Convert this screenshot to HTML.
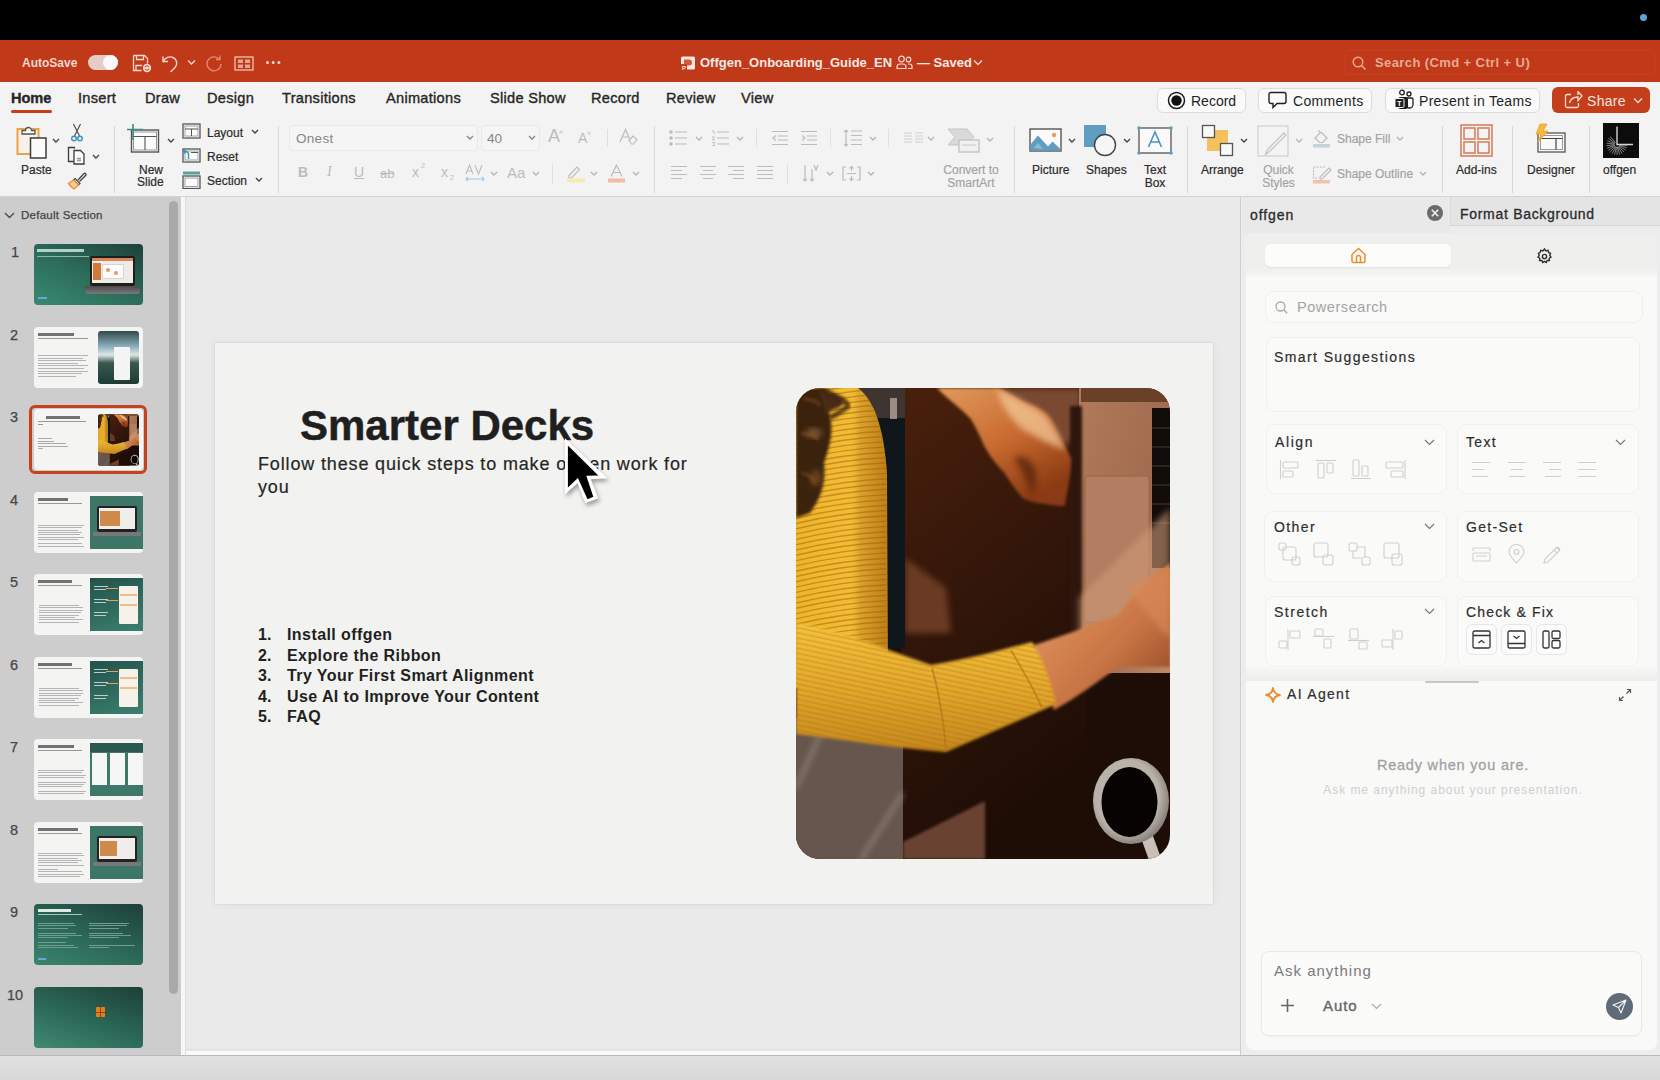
<!DOCTYPE html>
<html><head>
<meta charset="utf-8">
<style>
*{margin:0;padding:0;box-sizing:border-box}
html,body{width:1660px;height:1080px;overflow:hidden;background:#e9e9e9;font-family:"Liberation Sans",sans-serif}
.a{position:absolute}
#top{left:0;top:0;width:1660px;height:40px;background:#000}
#title{left:0;top:40px;width:1660px;height:42px;background:#c03a1a}
#ribbon{left:0;top:82px;width:1660px;height:115px;background:#f3f3f3;border-bottom:1px solid #d3d3d3}
#left{left:0;top:197px;width:181px;height:858px;background:#cdcdcd}
#lstrip{left:181px;top:197px;width:5px;height:858px;background:#f7f7f7;border-right:1px solid #dedede}
#main{left:186px;top:197px;width:1054px;height:858px;background:#eaeaea}
#slide{left:215px;top:343px;width:998px;height:561px;background:#f2f2f0;box-shadow:0 0 1px rgba(0,0,0,.22),0 0 10px rgba(0,0,0,.05)}
#rpane{left:1240px;top:197px;width:420px;height:858px;background:#ededed;border-left:1px solid #cfcfcf}
#status{left:0;top:1055px;width:1660px;height:25px;background:linear-gradient(#e0e0e0,#d8d8d8);border-top:1px solid #b9b9b9}
.tt{line-height:15px;white-space:nowrap}
.tab{top:90px;font-size:14.6px;letter-spacing:.28px;line-height:17px;color:#262626;white-space:nowrap;-webkit-text-stroke:.35px #262626}
.btn{top:88px;height:25px;border-radius:6px;background:#fafafa;border:1px solid #dcdcdc}
.lbl{font-size:12px;line-height:14px;color:#2b2b2b;white-space:nowrap;-webkit-text-stroke:.2px #2b2b2b}
.glbl{font-size:12px;line-height:14px;color:#a2a2a2;white-space:nowrap;-webkit-text-stroke:.15px #a2a2a2}
.chev{fill:none;stroke:#444;stroke-width:1.4}
.gchev{fill:none;stroke:#b5b5b5;stroke-width:1.3}
.sep{width:1px;background:#d8d8d8}
.th{width:109px;height:61px;border-radius:4px;overflow:hidden}
.card{border-radius:9px;border:1px solid #f0f0ef;background:#fafaf9}
.rh{font-size:14px;line-height:16px;color:#2e2e2e;-webkit-text-stroke:.2px #2e2e2e;white-space:nowrap}
.rchev{fill:none;stroke:#777;stroke-width:1.2}
.cfb{width:31px;height:31px;border-radius:6px;border:1px solid #e6e6e6;background:#fbfbfb}
</style></head><body>
<div id="top" class="a"></div>
<div id="title" class="a"></div>

<div class="a" style="left:1640px;top:14px;width:7px;height:7px;border-radius:50%;background:#5ea3d6"></div>
<div class="a tt" style="left:22px;top:56px;font-size:12px;font-weight:bold;color:#f2d8cf">AutoSave</div>
<div class="a" style="left:88px;top:55px;width:30px;height:15px;border-radius:8px;background:#e2cec7"></div>
<div class="a" style="left:103px;top:55px;width:15px;height:15px;border-radius:50%;background:#fafafa"></div>
<svg class="a" style="left:132px;top:54px" width="20" height="19" viewBox="0 0 20 19" fill="none" stroke="#f3d9cf" stroke-width="1.3">
<path d="M1.5 1.5h11l3 3v5"/><path d="M1.5 1.5v15h8"/><path d="M4.5 1.5v4h7v-4"/><path d="M4 16.5v-5h6"/>
<circle cx="15" cy="14" r="4.2" fill="#f3d9cf" stroke="none"/><path d="M13 13.5a2 2 0 0 1 3.8-.5M17 14.5a2 2 0 0 1-3.8.5" stroke="#c03a1a" stroke-width="1"/>
</svg>
<svg class="a" style="left:161px;top:54px" width="19" height="19" viewBox="0 0 19 19" fill="none" stroke="#f3d9cf" stroke-width="1.4">
<path d="M2 2.5v5h5"/><path d="M2.5 7c2-3.5 6-5 9.5-3.5 4 1.8 5 6.5 2 10L9.5 18"/>
</svg>
<svg class="a" style="left:187px;top:59px" width="9" height="7" viewBox="0 0 9 7" fill="none" stroke="#f3d9cf" stroke-width="1.3"><path d="M1 1.5l3.5 3.5 3.5-3.5"/></svg>
<svg class="a" style="left:205px;top:54px" width="18" height="18" viewBox="0 0 18 18" fill="none" stroke="#dc8c74" stroke-width="1.4">
<path d="M14.5 5.5A7 7 0 1 0 16 10"/><path d="M11 5.5h4v-4"/>
</svg>
<svg class="a" style="left:234px;top:56px" width="20" height="15" viewBox="0 0 20 15" fill="none" stroke="#f0cdbf" stroke-width="1.2">
<rect x="1" y="1" width="18" height="13"/><rect x="4" y="3.5" width="5" height="3.5" fill="#e0a593" stroke="none"/><rect x="11" y="3.5" width="5" height="3.5" fill="#e0a593" stroke="none"/><rect x="4" y="8.5" width="5" height="3.5" fill="#e0a593" stroke="none"/><rect x="11" y="8.5" width="5" height="3.5" fill="#e0a593" stroke="none"/>
</svg>
<div class="a" style="left:266px;top:61px;width:3px;height:3px;border-radius:50%;background:#f3d9cf;box-shadow:5.7px 0 0 #f3d9cf,11.4px 0 0 #f3d9cf"></div>
<svg class="a" style="left:680px;top:56px" width="16" height="15" viewBox="0 0 16 15">
<rect x="1" y="0.5" width="14" height="13" rx="1.5" fill="#f6e6e0"/><path d="M4 3.5h5a3 3 0 0 1 0 6H6v4H4z" fill="#d4583a"/><rect x="1" y="8" width="6" height="6" fill="#c23f20"/><text x="2" y="13.5" font-size="6" fill="#f6e6e0" font-family="Liberation Sans" font-weight="bold">P</text>
</svg>
<div class="a tt" style="left:700px;top:55px;font-size:13px;font-weight:bold;color:#f7e8e3">Offgen_Onboarding_Guide_EN</div>
<svg class="a" style="left:896px;top:55px" width="17" height="15" viewBox="0 0 17 15" fill="none" stroke="#f3d9cf" stroke-width="1.2">
<circle cx="5.5" cy="4" r="2.8"/><path d="M1 13.5v-1.5a3 3 0 0 1 3-3h3a3 3 0 0 1 3 3v1.5z"/><circle cx="12.5" cy="4.5" r="2.3"/><path d="M12 9h1.5a2.5 2.5 0 0 1 2.5 2.5v2h-4"/>
</svg>
<div class="a tt" style="left:917px;top:55px;font-size:13px;font-weight:bold;color:#f7e8e3">&mdash; Saved</div>
<svg class="a" style="left:973px;top:59px" width="10" height="7" viewBox="0 0 10 7" fill="none" stroke="#f3d9cf" stroke-width="1.4"><path d="M1 1.5l4 4 4-4"/></svg>
<div class="a" style="left:1345px;top:50px;width:310px;height:25px;border:1px dotted rgba(240,150,120,.18);border-radius:4px"></div>
<svg class="a" style="left:1352px;top:56px" width="15" height="15" viewBox="0 0 15 15" fill="none" stroke="#eaa893" stroke-width="1.4"><circle cx="6" cy="6" r="4.8"/><path d="M9.5 9.5l4 4"/></svg>
<div class="a tt" style="left:1375px;top:55px;font-size:13px;font-weight:bold;color:#eaa893;letter-spacing:.4px">Search (Cmd + Ctrl + U)</div>
<div id="ribbon" class="a"></div>

<div class="a tab" style="left:11px;font-weight:bold;letter-spacing:-.1px">Home</div>
<div class="a" style="left:11px;top:110px;width:41px;height:3px;border-radius:2px;background:#c43e1c"></div>
<div class="a tab" style="left:78px">Insert</div>
<div class="a tab" style="left:145px">Draw</div>
<div class="a tab" style="left:207px">Design</div>
<div class="a tab" style="left:282px">Transitions</div>
<div class="a tab" style="left:386px">Animations</div>
<div class="a tab" style="left:490px">Slide Show</div>
<div class="a tab" style="left:591px">Record</div>
<div class="a tab" style="left:666px">Review</div>
<div class="a tab" style="left:741px">View</div>
<div class="a btn" style="left:1157px;width:89px"></div>
<svg class="a" style="left:1167px;top:91px" width="19" height="19" viewBox="0 0 19 19"><circle cx="9.5" cy="9.5" r="8" fill="none" stroke="#1a1a1a" stroke-width="1.5"/><circle cx="9.5" cy="9.5" r="5.2" fill="#111"/></svg>
<div class="a tt" style="left:1191px;top:94px;font-size:14px;color:#1e1e1e">Record</div>
<div class="a btn" style="left:1258px;width:114px"></div>
<svg class="a" style="left:1268px;top:91px" width="19" height="18" viewBox="0 0 19 18" fill="none" stroke="#1e1e1e" stroke-width="1.4"><path d="M3 1.5h13a2 2 0 0 1 2 2v7a2 2 0 0 1-2 2H9l-4 4v-4H3a2 2 0 0 1-2-2v-7a2 2 0 0 1 2-2z"/></svg>
<div class="a tt" style="left:1293px;top:94px;font-size:14px;color:#1e1e1e;letter-spacing:.35px">Comments</div>
<div class="a btn" style="left:1385px;width:155px"></div>
<svg class="a" style="left:1394px;top:89px" width="20" height="21" viewBox="0 0 20 21">
<circle cx="8" cy="3.5" r="2.3" fill="none" stroke="#1e1e1e" stroke-width="1.3"/><circle cx="15" cy="5" r="2" fill="none" stroke="#1e1e1e" stroke-width="1.3"/>
<path d="M12 9h5.5a1.5 1.5 0 0 1 1.5 1.5v5a3.5 3.5 0 0 1-7 0" fill="none" stroke="#1e1e1e" stroke-width="1.3"/>
<rect x="4" y="8" width="10" height="12" rx="2.5" fill="#1e1e1e"/><rect x="1" y="9.5" width="9" height="9" rx="1.2" fill="#1e1e1e" stroke="#f9f9f9" stroke-width="1"/>
<text x="3" y="17" font-size="7.5" font-weight="bold" fill="#fff" font-family="Liberation Sans">T</text></svg>
<div class="a tt" style="left:1419px;top:94px;font-size:14px;color:#1e1e1e;letter-spacing:.3px">Present in Teams</div>
<div class="a" style="left:1552px;top:87px;width:98px;height:26px;border-radius:6px;background:#c43e1c"></div>
<svg class="a" style="left:1564px;top:91px" width="19" height="18" viewBox="0 0 19 18" fill="none" stroke="#f5ddd5" stroke-width="1.3"><path d="M7 3.5H3a1.5 1.5 0 0 0-1.5 1.5v10A1.5 1.5 0 0 0 3 16.5h10a1.5 1.5 0 0 0 1.5-1.5v-3"/><path d="M5.5 12c1-4 4-6 8.5-6V9.5l4-4.5-4-4.5V4"/></svg>
<div class="a tt" style="left:1587px;top:94px;font-size:14px;color:#f7e4dd;letter-spacing:.3px">Share</div>
<svg class="a" style="left:1633px;top:97px" width="10" height="7" viewBox="0 0 10 7" fill="none" stroke="#f5ddd5" stroke-width="1.3"><path d="M1 1.5l4 4 4-4"/></svg>

<!-- ribbon group clipboard -->
<svg class="a" style="left:16px;top:124px" width="34" height="36" viewBox="0 0 34 36">
<rect x="1.5" y="5" width="21" height="25" fill="#f7f1ea" stroke="#f0a045" stroke-width="2"/>
<path d="M6 10V6.5h3.5a3 3 0 0 1 6 0H19V10z" fill="#fbfbfb" stroke="#555" stroke-width="1.3"/>
<rect x="14.5" y="14" width="15.5" height="20" fill="#fbfbfb" stroke="#3c3c3c" stroke-width="1.5"/>
</svg>
<svg class="a chev" style="left:52px;top:138px" width="8" height="6" viewBox="0 0 8 6"><path d="M1 1l3 3 3-3"/></svg>
<div class="a lbl" style="left:21px;top:163px">Paste</div>
<svg class="a" style="left:70px;top:123px" width="14" height="19" viewBox="0 0 14 19" fill="none">
<path d="M3.5 1l6 12M10.5 1l-6 12" stroke="#444" stroke-width="1.1"/><circle cx="4" cy="15.5" r="2.3" stroke="#3e8fc3" stroke-width="1.4"/><circle cx="10" cy="15.5" r="2.3" stroke="#3e8fc3" stroke-width="1.4"/>
</svg>
<svg class="a" style="left:67px;top:146px" width="20" height="19" viewBox="0 0 20 19" fill="none" stroke="#3c3c3c" stroke-width="1.3">
<path d="M7.5 2.5V1.5H1.5v14h5"/><path d="M7 4.5h6.5l3.5 3.5v10H7z" fill="#fbfbfb"/><path d="M10 12.5h4M10 14.5h4" stroke="#999"/>
</svg>
<svg class="a chev" style="left:92px;top:154px" width="8" height="6" viewBox="0 0 8 6"><path d="M1 1l3 3 3-3"/></svg>
<svg class="a" style="left:67px;top:171px" width="20" height="19" viewBox="0 0 20 19" fill="none">
<path d="M11 9l6-6.5a1.3 1.3 0 0 1 1.8 1.8L12.5 10.5" stroke="#444" stroke-width="1.3"/>
<path d="M8 7.5l5 5-1.5 1.5-5-5z" fill="#fbfbfb" stroke="#444" stroke-width="1.2"/>
<path d="M6.5 9L1.5 12.5c1.5 2 3 4 5.5 5.5L11.5 14z" fill="#f5d09a" stroke="#ec8c3a" stroke-width="1.3"/>
</svg>
<div class="a sep" style="left:114px;top:126px;height:67px"></div>
<!-- slides group -->
<svg class="a" style="left:127px;top:123px" width="34" height="31" viewBox="0 0 34 31" fill="none">
<rect x="4.5" y="7" width="27" height="22" fill="#fafafa" stroke="#555" stroke-width="1.4"/>
<rect x="6.5" y="9" width="23" height="18" stroke="#999" stroke-width="1"/>
<path d="M6.5 13.5h23M18 13.5V27" stroke="#555" stroke-width="1.1"/>
<path d="M6 1v16M0 6.5h16" stroke="#3c8c80" stroke-width="1.6"/>
</svg>
<svg class="a chev" style="left:167px;top:138px" width="8" height="6" viewBox="0 0 8 6"><path d="M1 1l3 3 3-3"/></svg>
<div class="a lbl" style="left:138px;top:164px;line-height:12px;text-align:center;width:26px">New</div>
<div class="a lbl" style="left:137px;top:176px;line-height:12px">Slide</div>
<svg class="a" style="left:182px;top:123px" width="19" height="16" viewBox="0 0 19 16" fill="none">
<rect x="1" y="1" width="17" height="14" fill="#fbfbfb" stroke="#555" stroke-width="1.3"/><rect x="3" y="3" width="13" height="10" stroke="#999" stroke-width=".9"/><path d="M3 6h13M9.5 6v7" stroke="#555" stroke-width="1"/>
</svg>
<div class="a lbl" style="left:207px;top:126px">Layout</div>
<svg class="a chev" style="left:251px;top:129px" width="8" height="6" viewBox="0 0 8 6"><path d="M1 1l3 3 3-3"/></svg>
<svg class="a" style="left:182px;top:147px" width="19" height="16" viewBox="0 0 19 16" fill="none">
<rect x="1" y="2" width="17" height="13" fill="#fbfbfb" stroke="#555" stroke-width="1.3"/><rect x="3" y="4" width="13" height="9" stroke="#999" stroke-width=".9"/><path d="M9 5.5h7" stroke="#555" stroke-width="1"/>
<path d="M6.5 12V7.5a3 3 0 0 0-3-3H1.5M3.5 2.5l-2 2 2 2" stroke="#3e8fc3" stroke-width="1.4"/>
</svg>
<div class="a lbl" style="left:207px;top:150px">Reset</div>
<svg class="a" style="left:182px;top:171px" width="19" height="18" viewBox="0 0 19 18" fill="none">
<rect x="1" y="0.5" width="17" height="3" fill="#5aa39a"/>
<rect x="1" y="5" width="17" height="12.5" fill="#fbfbfb" stroke="#555" stroke-width="1.3"/><rect x="3" y="7" width="13" height="8.5" stroke="#999" stroke-width=".9"/>
</svg>
<div class="a lbl" style="left:207px;top:174px">Section</div>
<svg class="a chev" style="left:255px;top:177px" width="8" height="6" viewBox="0 0 8 6"><path d="M1 1l3 3 3-3"/></svg>
<div class="a sep" style="left:278px;top:126px;height:67px"></div>

<!-- font group -->
<div class="a" style="left:289px;top:125px;width:189px;height:26px;border:1px solid #e9e9e9;border-radius:4px;background:#f5f5f5"></div>
<div class="a" style="left:296px;top:131px;font-size:13.5px;line-height:15px;color:#868686;letter-spacing:.3px">Onest</div>
<svg class="a gchev" style="left:466px;top:135px" width="8" height="6" viewBox="0 0 8 6"><path d="M1 1l3 3 3-3" stroke="#888"/></svg>
<div class="a" style="left:481px;top:125px;width:59px;height:26px;border:1px solid #e9e9e9;border-radius:4px;background:#f5f5f5"></div>
<div class="a" style="left:487px;top:131px;font-size:13.5px;line-height:15px;color:#868686">40</div>
<svg class="a gchev" style="left:528px;top:135px" width="8" height="6" viewBox="0 0 8 6"><path d="M1 1l3 3 3-3" stroke="#888"/></svg>
<div class="a" style="left:548px;top:127px;font-size:18px;line-height:18px;color:#bcbcbc">A</div>
<div class="a" style="left:559px;top:129px;font-size:7px;line-height:7px;color:#bcbcbc">&#708;</div>
<div class="a" style="left:578px;top:131px;font-size:14px;line-height:14px;color:#bcbcbc">A</div>
<div class="a" style="left:587px;top:130px;font-size:7px;line-height:7px;color:#bcbcbc">&#709;</div>
<div class="a" style="left:607px;top:129px;width:1px;height:18px;background:#dedede"></div>
<svg class="a" style="left:619px;top:128px" width="20" height="18" viewBox="0 0 20 18" fill="none" stroke="#bcbcbc" stroke-width="1.2">
<path d="M1 14L6.5 1.5 12 14M3.3 9h6"/><path d="M10 12.5l4-4.5 4 3.5-3.5 4.5h-2z" fill="#f3f3f3"/>
</svg>
<div class="a" style="left:298px;top:165px;font-size:14px;line-height:14px;font-weight:bold;color:#bcbcbc">B</div>
<div class="a" style="left:327px;top:165px;font-size:14px;line-height:14px;font-style:italic;color:#bcbcbc;font-family:'Liberation Serif'">I</div>
<div class="a" style="left:354px;top:165px;font-size:14px;line-height:14px;color:#bcbcbc;text-decoration:underline">U</div>
<div class="a" style="left:380px;top:167px;font-size:13px;line-height:13px;color:#bcbcbc;text-decoration:line-through">ab</div>
<div class="a" style="left:412px;top:165px;font-size:14px;line-height:14px;color:#bcbcbc">x</div><div class="a" style="left:421px;top:162px;font-size:7px;line-height:7px;color:#bcbcbc">2</div>
<div class="a" style="left:441px;top:165px;font-size:14px;line-height:14px;color:#bcbcbc">x</div><div class="a" style="left:450px;top:174px;font-size:7px;line-height:7px;color:#bcbcbc">2</div>
<svg class="a" style="left:465px;top:164px" width="20" height="18" viewBox="0 0 20 18" fill="none" stroke="#bcbcbc" stroke-width="1.1">
<path d="M1 10L4.5 1 8 10M2.3 7h4.5M10 1l3.5 9 3.5-9"/><path d="M1 15h18M3 13l-2 2 2 2M17 13l2 2-2 2" stroke="#9ccbe6"/>
</svg>
<svg class="a gchev" style="left:490px;top:171px" width="8" height="6" viewBox="0 0 8 6"><path d="M1 1l3 3 3-3"/></svg>
<div class="a" style="left:507px;top:165px;font-size:15px;line-height:15px;color:#bcbcbc">Aa</div>
<svg class="a gchev" style="left:532px;top:171px" width="8" height="6" viewBox="0 0 8 6"><path d="M1 1l3 3 3-3"/></svg>
<div class="a" style="left:552px;top:164px;width:1px;height:20px;background:#e0e0e0"></div>
<svg class="a" style="left:566px;top:164px" width="20" height="19" viewBox="0 0 20 19" fill="none">
<path d="M3 11.5l8-8.5 2.5 2.5-8 8.5H3z" stroke="#bcbcbc" stroke-width="1.2"/><rect x="1" y="14.5" width="18" height="4" fill="#f3ecb0"/>
</svg>
<svg class="a gchev" style="left:590px;top:171px" width="8" height="6" viewBox="0 0 8 6"><path d="M1 1l3 3 3-3"/></svg>
<svg class="a" style="left:607px;top:164px" width="19" height="19" viewBox="0 0 19 19" fill="none">
<path d="M4 12.5L9.5 1 15 12.5M6 8.5h7" stroke="#bcbcbc" stroke-width="1.2"/><rect x="1" y="14.5" width="17" height="4" fill="#efbca8"/>
</svg>
<svg class="a gchev" style="left:632px;top:171px" width="8" height="6" viewBox="0 0 8 6"><path d="M1 1l3 3 3-3"/></svg>
<div class="a sep" style="left:654px;top:126px;height:67px"></div>
<!-- paragraph -->
<svg class="a" style="left:669px;top:130px" width="18" height="16" viewBox="0 0 18 16" fill="none" stroke="#bcbcbc" stroke-width="1.2">
<circle cx="2" cy="2" r="1.2" fill="#bcbcbc"/><circle cx="2" cy="8" r="1.2" fill="#bcbcbc"/><circle cx="2" cy="14" r="1.2" fill="#bcbcbc"/><path d="M6 2h12M6 8h12M6 14h12"/>
</svg>
<svg class="a gchev" style="left:695px;top:136px" width="8" height="6" viewBox="0 0 8 6"><path d="M1 1l3 3 3-3"/></svg>
<svg class="a" style="left:711px;top:130px" width="18" height="16" viewBox="0 0 18 16" fill="none" stroke="#bcbcbc" stroke-width="1.2">
<path d="M1 1h2v3M1 7h2.5l-2 3h2.5M1 12.5h2.5v3H1" stroke-width=".9"/><path d="M6 2h12M6 8h12M6 14h12"/>
</svg>
<svg class="a gchev" style="left:736px;top:136px" width="8" height="6" viewBox="0 0 8 6"><path d="M1 1l3 3 3-3"/></svg>
<div class="a" style="left:756px;top:129px;width:1px;height:18px;background:#e0e0e0"></div>
<svg class="a" style="left:771px;top:130px" width="17" height="16" viewBox="0 0 17 16" fill="none" stroke="#bcbcbc" stroke-width="1.2">
<path d="M1 1.5h16M7 6h10M7 10h10M1 14.5h16M5 5.5l-3 2.5 3 2.5"/>
</svg>
<svg class="a" style="left:800px;top:130px" width="17" height="16" viewBox="0 0 17 16" fill="none" stroke="#bcbcbc" stroke-width="1.2">
<path d="M1 1.5h16M7 6h10M7 10h10M1 14.5h16M2 5.5l3 2.5-3 2.5"/>
</svg>
<div class="a" style="left:830px;top:129px;width:1px;height:18px;background:#e0e0e0"></div>
<svg class="a" style="left:843px;top:129px" width="19" height="18" viewBox="0 0 19 18" fill="none" stroke="#bcbcbc" stroke-width="1.2">
<path d="M3 1v16M1 3l2-2 2 2M1 15l2 2 2-2M8 2h11M8 6.5h11M8 11h11M8 15.5h11"/>
</svg>
<svg class="a gchev" style="left:869px;top:136px" width="8" height="6" viewBox="0 0 8 6"><path d="M1 1l3 3 3-3"/></svg>
<div class="a" style="left:888px;top:129px;width:1px;height:18px;background:#e0e0e0"></div>
<svg class="a" style="left:903px;top:132px" width="21" height="11" viewBox="0 0 21 11" fill="none" stroke="#cfcfcf" stroke-width="1.1">
<path d="M1 1h8M1 4h8M1 7h8M1 10h8M12 1h8M12 4h8M12 7h8M12 10h8"/>
</svg>
<svg class="a gchev" style="left:927px;top:136px" width="8" height="6" viewBox="0 0 8 6"><path d="M1 1l3 3 3-3"/></svg>
<svg class="a" style="left:947px;top:128px" width="34" height="25" viewBox="0 0 34 25">
<path d="M1 1h19l7 8-7 8H1l7-8z" fill="#d9d9d9" stroke="#c3c3c3" stroke-width="1"/>
<rect x="12" y="12" width="20" height="12" fill="#f1f1f1" stroke="#bdbdbd" stroke-width="1.2"/><path d="M15 17h14" stroke="#c8c8c8"/>
</svg>
<svg class="a gchev" style="left:986px;top:137px" width="8" height="6" viewBox="0 0 8 6"><path d="M1 1l3 3 3-3"/></svg>
<div class="a glbl" style="left:942px;top:164px;line-height:13px;width:58px;text-align:center">Convert to</div>
<div class="a glbl" style="left:942px;top:177px;line-height:13px;width:58px;text-align:center">SmartArt</div>
<svg class="a" style="left:670px;top:165px" width="17" height="16" viewBox="0 0 17 16" fill="none" stroke="#bcbcbc" stroke-width="1.2"><path d="M1 1.5h16M1 5.5h11M1 9.5h16M1 13.5h11"/></svg>
<svg class="a" style="left:699px;top:165px" width="17" height="16" viewBox="0 0 17 16" fill="none" stroke="#bcbcbc" stroke-width="1.2"><path d="M1 1.5h16M4 5.5h10M1 9.5h16M4 13.5h10"/></svg>
<svg class="a" style="left:727px;top:165px" width="17" height="16" viewBox="0 0 17 16" fill="none" stroke="#bcbcbc" stroke-width="1.2"><path d="M1 1.5h16M6 5.5h11M1 9.5h16M6 13.5h11"/></svg>
<svg class="a" style="left:756px;top:165px" width="17" height="16" viewBox="0 0 17 16" fill="none" stroke="#bcbcbc" stroke-width="1.2"><path d="M1 1.5h16M1 5.5h16M1 9.5h16M1 13.5h16"/></svg>
<div class="a" style="left:787px;top:164px;width:1px;height:20px;background:#e0e0e0"></div>
<svg class="a" style="left:802px;top:164px" width="18" height="19" viewBox="0 0 18 19" fill="none" stroke="#bcbcbc" stroke-width="1.2">
<path d="M3 1v16M1 15l2 2 2-2M10 5v12M8 15l2 2 2-2M12 1l2 5 2-5M12.7 4h2.6"/>
</svg>
<svg class="a gchev" style="left:826px;top:171px" width="8" height="6" viewBox="0 0 8 6"><path d="M1 1l3 3 3-3"/></svg>
<svg class="a" style="left:842px;top:165px" width="19" height="17" viewBox="0 0 19 17" fill="none" stroke="#bcbcbc" stroke-width="1.2">
<path d="M4 2H1v13h3M15 2h3v13h-3"/><path d="M9.5 1v5M7.5 3.5l2-2 2 2M9.5 16v-5M7.5 13.5l2 2 2-2M5 8.5h9"/>
</svg>
<svg class="a gchev" style="left:867px;top:171px" width="8" height="6" viewBox="0 0 8 6"><path d="M1 1l3 3 3-3"/></svg>
<div class="a sep" style="left:1014px;top:126px;height:67px"></div>

<!-- insert group -->
<svg class="a" style="left:1029px;top:128px" width="33" height="24" viewBox="0 0 33 24">
<rect x="1" y="1" width="31" height="22" fill="#fafafa" stroke="#555" stroke-width="1.4"/>
<path d="M1.5 22.5v-6L9 7.5l10 11 4.5-5 8.5 8v1z" fill="#5f9ec0"/><path d="M5 20l4-5 5 6" fill="#8dbcd3"/>
<circle cx="25" cy="7" r="2.2" fill="#ef9d52"/>
</svg>
<svg class="a chev" style="left:1068px;top:138px" width="8" height="6" viewBox="0 0 8 6"><path d="M1 1l3 3 3-3"/></svg>
<div class="a lbl" style="left:1032px;top:163px">Picture</div>
<svg class="a" style="left:1083px;top:124px" width="34" height="33" viewBox="0 0 34 33">
<path d="M1 1h22v12a10 10 0 0 0-9 10H1z" fill="#5f9ec0"/>
<circle cx="22" cy="21" r="10.5" fill="#f6f6f6" stroke="#444" stroke-width="1.4"/>
</svg>
<svg class="a chev" style="left:1123px;top:138px" width="8" height="6" viewBox="0 0 8 6"><path d="M1 1l3 3 3-3"/></svg>
<div class="a lbl" style="left:1086px;top:163px">Shapes</div>
<svg class="a" style="left:1137px;top:126px" width="36" height="29" viewBox="0 0 36 29">
<rect x="2" y="2" width="32" height="25" fill="#fafafa" stroke="#555" stroke-width="1.3"/>
<circle cx="2" cy="2" r="1.8" fill="#5f9ec0"/><circle cx="34" cy="2" r="1.8" fill="#5f9ec0"/><circle cx="2" cy="27" r="1.8" fill="#5f9ec0"/><circle cx="34" cy="27" r="1.8" fill="#5f9ec0"/>
<path d="M11.5 21L18 6l6.5 15M13.5 16h9" fill="none" stroke="#4d94bf" stroke-width="1.6"/>
</svg>
<div class="a lbl" style="left:1137px;top:164px;line-height:12px;width:36px;text-align:center">Text</div>
<div class="a lbl" style="left:1137px;top:177px;line-height:12px;width:36px;text-align:center">Box</div>
<div class="a sep" style="left:1187px;top:126px;height:67px"></div>
<svg class="a" style="left:1201px;top:124px" width="33" height="33" viewBox="0 0 33 33">
<rect x="6" y="6" width="21" height="21" fill="#f5c060"/>
<rect x="1.5" y="1.5" width="12" height="12" fill="#f8f8f8" stroke="#555" stroke-width="1.3"/>
<rect x="19.5" y="19.5" width="12" height="12" fill="#f8f8f8" stroke="#555" stroke-width="1.3"/>
</svg>
<svg class="a chev" style="left:1240px;top:138px" width="8" height="6" viewBox="0 0 8 6"><path d="M1 1l3 3 3-3"/></svg>
<div class="a lbl" style="left:1201px;top:163px">Arrange</div>
<svg class="a" style="left:1257px;top:125px" width="34" height="34" viewBox="0 0 34 34" fill="none">
<rect x="1" y="1" width="30" height="30" stroke="#d2d2d2" stroke-width="1.3"/>
<path d="M8 30l3-6 16-16 2 2-16 16z" stroke="#c5c5c5" stroke-width="1.3"/>
</svg>
<svg class="a gchev" style="left:1295px;top:138px" width="8" height="6" viewBox="0 0 8 6"><path d="M1 1l3 3 3-3"/></svg>
<div class="a glbl" style="left:1262px;top:164px;line-height:13px;width:33px;text-align:center">Quick</div>
<div class="a glbl" style="left:1262px;top:177px;line-height:13px;width:33px;text-align:center">Styles</div>
<svg class="a" style="left:1312px;top:129px" width="19" height="19" viewBox="0 0 19 19" fill="none">
<path d="M3 9l6-6 6 6-4.5 4.5H7.5z" stroke="#bcbcbc" stroke-width="1.2"/><path d="M7 3.5V1" stroke="#bcbcbc" stroke-width="1.2"/><rect x="1" y="15" width="17" height="3.5" fill="#c5d3d8"/>
</svg>
<div class="a glbl" style="left:1337px;top:132px">Shape Fill</div>
<svg class="a gchev" style="left:1396px;top:136px" width="8" height="6" viewBox="0 0 8 6"><path d="M1 1l3 3 3-3"/></svg>
<svg class="a" style="left:1312px;top:165px" width="20" height="19" viewBox="0 0 20 19" fill="none">
<path d="M13 2H1.5v11h4" stroke="#bcbcbc" stroke-width="1.1" stroke-dasharray="2 1"/><path d="M8 12l9-9 2 2-9 9H8z" stroke="#bcbcbc" stroke-width="1.2"/><rect x="1" y="15" width="17" height="3.5" fill="#f3c2ad"/>
</svg>
<div class="a glbl" style="left:1337px;top:167px">Shape Outline</div>
<svg class="a gchev" style="left:1419px;top:171px" width="8" height="6" viewBox="0 0 8 6"><path d="M1 1l3 3 3-3"/></svg>
<div class="a sep" style="left:1442px;top:126px;height:67px"></div>
<svg class="a" style="left:1460px;top:124px" width="33" height="33" viewBox="0 0 33 33" fill="none" stroke="#d8805f" stroke-width="1.6">
<rect x="1" y="1" width="31" height="31"/><rect x="4" y="4" width="11" height="11"/><rect x="18" y="4" width="11" height="11"/><rect x="4" y="18" width="11" height="11"/><rect x="18" y="18" width="11" height="11"/>
</svg>
<div class="a lbl" style="left:1456px;top:163px">Add-ins</div>
<div class="a sep" style="left:1512px;top:126px;height:67px"></div>
<svg class="a" style="left:1532px;top:123px" width="35" height="31" viewBox="0 0 35 31">
<rect x="6" y="10" width="27" height="19" fill="#f8f8f8" stroke="#555" stroke-width="1.3"/><rect x="8.5" y="12.5" width="22" height="14" fill="none" stroke="#999" stroke-width="1"/>
<path d="M8.5 15.5h22M24 15.5v11" stroke="#444" stroke-width="1.2"/>
<path d="M8 1h7l-4 7h5L6 19l3-8H4z" fill="#f5b83a" stroke="#f0a030" stroke-width=".8"/>
</svg>
<div class="a lbl" style="left:1527px;top:163px">Designer</div>
<div class="a sep" style="left:1589px;top:126px;height:67px"></div>
<svg class="a" style="left:1603px;top:123px" width="36" height="35" viewBox="0 0 36 35">
<rect width="36" height="35" fill="#0c0c0c"/>
<g fill="none"><path d="M16.5 21.7L24.5 22.4M16.4 22.3L23.9 24.9M16.1 22.9L22.8 27.2M15.7 23.3L21.1 29.2M15.2 23.7L19.1 30.7M14.6 23.9L16.7 31.7M14.0 24.0L14.1 32.0M13.4 23.9L11.6 31.7M12.8 23.7L9.2 30.8M12.3 23.4L7.0 29.4M11.9 22.9L5.3 27.4M11.7 22.4L4.2 25.1M11.5 21.8L3.6 22.6M11.5 21.2L3.6 20.1M11.7 20.6L4.3 17.6M12.0 20.0L5.5 15.3M12.4 19.6L7.3 13.5" stroke="#b0b0b0" stroke-width=".7"/><path d="M14 3.5v18h16" stroke="#d4d4d4" stroke-width="1.4"/></g>
</svg>
<div class="a lbl" style="left:1603px;top:163px">offgen</div>
<div id="left" class="a"></div>

<svg class="a" style="left:4px;top:212px" width="11" height="7" viewBox="0 0 11 7" fill="none" stroke="#4a4a4a" stroke-width="1.4"><path d="M1 1l4.5 4.5L10 1"/></svg>
<div class="a" style="left:21px;top:208px;font-size:11.5px;line-height:14px;color:#454545;white-space:nowrap;letter-spacing:.25px;-webkit-text-stroke:.25px #454545">Default Section</div>
<div class="a" style="left:169px;top:201px;width:9px;height:793px;border-radius:5px;background:#a9a9a9"></div>
<div class="a" style="left:11px;top:245px;font-size:14.5px;line-height:15px;color:#464646;-webkit-text-stroke:.25px #464646">1</div>
<div class="a" style="left:10px;top:328px;font-size:14.5px;line-height:15px;color:#464646;-webkit-text-stroke:.25px #464646">2</div>
<div class="a" style="left:10px;top:410px;font-size:14.5px;line-height:15px;color:#464646;-webkit-text-stroke:.25px #464646">3</div>
<div class="a" style="left:10px;top:493px;font-size:14.5px;line-height:15px;color:#464646;-webkit-text-stroke:.25px #464646">4</div>
<div class="a" style="left:10px;top:575px;font-size:14.5px;line-height:15px;color:#464646;-webkit-text-stroke:.25px #464646">5</div>
<div class="a" style="left:10px;top:658px;font-size:14.5px;line-height:15px;color:#464646;-webkit-text-stroke:.25px #464646">6</div>
<div class="a" style="left:10px;top:740px;font-size:14.5px;line-height:15px;color:#464646;-webkit-text-stroke:.25px #464646">7</div>
<div class="a" style="left:10px;top:823px;font-size:14.5px;line-height:15px;color:#464646;-webkit-text-stroke:.25px #464646">8</div>
<div class="a" style="left:10px;top:905px;font-size:14.5px;line-height:15px;color:#464646;-webkit-text-stroke:.25px #464646">9</div>
<div class="a" style="left:7px;top:988px;font-size:14.5px;line-height:15px;color:#464646;-webkit-text-stroke:.25px #464646">10</div>
<div class="a" style="left:29px;top:405px;width:118px;height:69px;border:3px solid #c5421f;border-radius:6px"></div>
<div class="a th" style="left:34px;top:244px;background:linear-gradient(25deg,#3a8a70 0%,#2b6b59 50%,#1d4038 100%)"><div class="a" style="left:3px;top:5px;width:47px;height:3px;background:#cfe3da;opacity:.85"></div><div class="a" style="left:3px;top:12px;width:52px;height:1px;background:#8fb5a8"></div><div class="a" style="left:56px;top:12px;width:45px;height:30px;background:#1e1e1e;border-radius:2px"></div><div class="a" style="left:58px;top:14px;width:41px;height:25px;background:#efece6"></div><div class="a" style="left:58px;top:14px;width:41px;height:3px;background:#d9835a"></div><div class="a" style="left:59px;top:19px;width:8px;height:17px;background:#d07a3a"></div><div class="a" style="left:68px;top:20px;width:22px;height:15px;background:#fbfbfb;border:1px solid #d6d6d6"></div><div class="a" style="left:72px;top:24px;width:4px;height:4px;border-radius:50%;background:#e89a60"></div><div class="a" style="left:80px;top:27px;width:4px;height:4px;border-radius:50%;background:#e89a60"></div><div class="a" style="left:51px;top:42px;width:55px;height:8px;background:linear-gradient(#4a4a4a,#7a7a7a);border-radius:0 0 3px 3px"></div><div class="a" style="left:4px;top:53px;width:9px;height:2px;background:#6aa6d8"></div></div>
<div class="a th" style="left:34px;top:327px;background:#f4f4f2;"><div class="a" style="left:4px;top:6px;width:36px;height:2.5px;background:#5a5a5a;opacity:.85"></div><div class="a" style="left:4px;top:11px;width:50px;height:1px;background:#999"></div><div class="a" style="left:4px;top:28.0px;width:50px;height:1px;background:#b4b4b4"></div><div class="a" style="left:4px;top:30.6px;width:45px;height:1px;background:#b4b4b4"></div><div class="a" style="left:4px;top:33.2px;width:48px;height:1px;background:#b4b4b4"></div><div class="a" style="left:4px;top:35.8px;width:40px;height:1px;background:#b4b4b4"></div><div class="a" style="left:4px;top:38.4px;width:50px;height:1px;background:#b4b4b4"></div><div class="a" style="left:4px;top:41.0px;width:46px;height:1px;background:#b4b4b4"></div><div class="a" style="left:4px;top:43.6px;width:50px;height:1px;background:#b4b4b4"></div><div class="a" style="left:4px;top:46.2px;width:44px;height:1px;background:#b4b4b4"></div><div class="a" style="left:4px;top:48.8px;width:38px;height:1px;background:#b4b4b4"></div><div class="a" style="left:64px;top:4px;width:41px;height:53px;border-radius:3px;background:linear-gradient(180deg,#2f4a48 0%,#8fb0c0 30%,#e0e6e8 45%,#3a5a50 60%,#1d3b34 100%)"></div><div class="a" style="left:80px;top:20px;width:16px;height:33px;background:#f4f4f4;border-radius:1px"></div></div>
<div class="a th" style="left:34px;top:409px;background:#f4f4f2;"><div class="a" style="left:12px;top:7px;width:34px;height:2.5px;background:#5a5a5a;opacity:.85"></div><div class="a" style="left:4px;top:12px;width:48px;height:1px;background:#999"></div><div class="a" style="left:4px;top:14.5px;width:5px;height:1px;background:#999"></div><div class="a" style="left:4px;top:29.0px;width:14px;height:1px;background:#aaa"></div><div class="a" style="left:4px;top:31.6px;width:16px;height:1px;background:#aaa"></div><div class="a" style="left:4px;top:34.2px;width:28px;height:1px;background:#aaa"></div><div class="a" style="left:4px;top:36.8px;width:30px;height:1px;background:#aaa"></div><div class="a" style="left:4px;top:39.4px;width:5px;height:1px;background:#aaa"></div><svg class="a" style="left:64px;top:5px" width="41" height="52" viewBox="0 0 374 471"><use href="#photoG"/></svg></div>
<div class="a th" style="left:34px;top:492px;background:#f4f4f2;"><div class="a" style="left:4px;top:6px;width:30px;height:2.5px;background:#5a5a5a;opacity:.85"></div><div class="a" style="left:4px;top:11px;width:44px;height:1px;background:#999"></div><div class="a" style="left:4px;top:33.0px;width:46px;height:1px;background:#b4b4b4"></div><div class="a" style="left:4px;top:35.3px;width:44px;height:1px;background:#b4b4b4"></div><div class="a" style="left:4px;top:37.6px;width:40px;height:1px;background:#b4b4b4"></div><div class="a" style="left:4px;top:39.9px;width:44px;height:1px;background:#b4b4b4"></div><div class="a" style="left:4px;top:42.2px;width:42px;height:1px;background:#b4b4b4"></div><div class="a" style="left:4px;top:44.5px;width:46px;height:1px;background:#b4b4b4"></div><div class="a" style="left:4px;top:46.8px;width:40px;height:1px;background:#b4b4b4"></div><div class="a" style="left:4px;top:49.1px;width:0px;height:1px;background:#b4b4b4"></div><div class="a" style="left:4px;top:51.4px;width:44px;height:1px;background:#b4b4b4"></div><div class="a" style="left:4px;top:53.7px;width:46px;height:1px;background:#b4b4b4"></div><div class="a" style="left:56px;top:4px;width:53px;height:53px;background:#3d7566"></div><div class="a" style="left:63px;top:14px;width:40px;height:26px;background:#222;border-radius:2px"></div><div class="a" style="left:65px;top:16px;width:36px;height:21px;background:#f0eeea"></div><div class="a" style="left:66px;top:19px;width:20px;height:15px;background:#d08a4a"></div><div class="a" style="left:59px;top:40px;width:48px;height:4px;background:#777"></div></div>
<div class="a th" style="left:34px;top:574px;background:#f4f4f2;"><div class="a" style="left:4px;top:6px;width:34px;height:2.5px;background:#5a5a5a;opacity:.85"></div><div class="a" style="left:4px;top:11px;width:44px;height:1px;background:#999"></div><div class="a" style="left:5px;top:31.0px;width:40px;height:1px;background:#b4b4b4"></div><div class="a" style="left:5px;top:33.4px;width:44px;height:1px;background:#b4b4b4"></div><div class="a" style="left:5px;top:35.8px;width:44px;height:1px;background:#b4b4b4"></div><div class="a" style="left:5px;top:38.2px;width:42px;height:1px;background:#b4b4b4"></div><div class="a" style="left:5px;top:40.6px;width:40px;height:1px;background:#b4b4b4"></div><div class="a" style="left:5px;top:43.0px;width:36px;height:1px;background:#b4b4b4"></div><div class="a" style="left:5px;top:45.4px;width:44px;height:1px;background:#b4b4b4"></div><div class="a" style="left:5px;top:47.8px;width:40px;height:1px;background:#b4b4b4"></div><div class="a" style="left:56px;top:4px;width:53px;height:53px;background:linear-gradient(160deg,#24524a,#3a8070)"></div><div class="a" style="left:60px;top:12.0px;width:14px;height:1px;background:#b8d0c8"></div><div class="a" style="left:60px;top:14.6px;width:12px;height:1px;background:#b8d0c8"></div><div class="a" style="left:60px;top:17.2px;width:0px;height:1px;background:#b8d0c8"></div><div class="a" style="left:60px;top:19.8px;width:0px;height:1px;background:#b8d0c8"></div><div class="a" style="left:60px;top:22.4px;width:0px;height:1px;background:#b8d0c8"></div><div class="a" style="left:60px;top:25.0px;width:14px;height:1px;background:#b8d0c8"></div><div class="a" style="left:60px;top:27.6px;width:12px;height:1px;background:#b8d0c8"></div><div class="a" style="left:60px;top:30.2px;width:0px;height:1px;background:#b8d0c8"></div><div class="a" style="left:60px;top:32.8px;width:0px;height:1px;background:#b8d0c8"></div><div class="a" style="left:60px;top:35.4px;width:0px;height:1px;background:#b8d0c8"></div><div class="a" style="left:60px;top:38.0px;width:14px;height:1px;background:#b8d0c8"></div><div class="a" style="left:60px;top:40.6px;width:12px;height:1px;background:#b8d0c8"></div><div class="a" style="left:85px;top:12px;width:19px;height:38px;background:#f6f2ea;border-radius:1px"></div><div class="a" style="left:86px;top:20px;width:17px;height:1.5px;background:#e8b070;opacity:.8"></div><div class="a" style="left:86px;top:30px;width:17px;height:1.5px;background:#e8b070;opacity:.8"></div><div class="a" style="left:72px;top:14px;width:12px;height:1px;background:#e8a060"></div><div class="a" style="left:72px;top:26px;width:12px;height:1px;background:#e8a060"></div></div>
<div class="a th" style="left:34px;top:657px;background:#f4f4f2;"><div class="a" style="left:4px;top:6px;width:34px;height:2.5px;background:#5a5a5a;opacity:.85"></div><div class="a" style="left:4px;top:11px;width:44px;height:1px;background:#999"></div><div class="a" style="left:5px;top:31.0px;width:40px;height:1px;background:#b4b4b4"></div><div class="a" style="left:5px;top:33.4px;width:44px;height:1px;background:#b4b4b4"></div><div class="a" style="left:5px;top:35.8px;width:44px;height:1px;background:#b4b4b4"></div><div class="a" style="left:5px;top:38.2px;width:42px;height:1px;background:#b4b4b4"></div><div class="a" style="left:5px;top:40.6px;width:40px;height:1px;background:#b4b4b4"></div><div class="a" style="left:5px;top:43.0px;width:36px;height:1px;background:#b4b4b4"></div><div class="a" style="left:5px;top:45.4px;width:44px;height:1px;background:#b4b4b4"></div><div class="a" style="left:5px;top:47.8px;width:40px;height:1px;background:#b4b4b4"></div><div class="a" style="left:56px;top:4px;width:53px;height:53px;background:linear-gradient(160deg,#24524a,#3a8070)"></div><div class="a" style="left:60px;top:12.0px;width:14px;height:1px;background:#b8d0c8"></div><div class="a" style="left:60px;top:14.6px;width:12px;height:1px;background:#b8d0c8"></div><div class="a" style="left:60px;top:17.2px;width:0px;height:1px;background:#b8d0c8"></div><div class="a" style="left:60px;top:19.8px;width:0px;height:1px;background:#b8d0c8"></div><div class="a" style="left:60px;top:22.4px;width:0px;height:1px;background:#b8d0c8"></div><div class="a" style="left:60px;top:25.0px;width:14px;height:1px;background:#b8d0c8"></div><div class="a" style="left:60px;top:27.6px;width:12px;height:1px;background:#b8d0c8"></div><div class="a" style="left:60px;top:30.2px;width:0px;height:1px;background:#b8d0c8"></div><div class="a" style="left:60px;top:32.8px;width:0px;height:1px;background:#b8d0c8"></div><div class="a" style="left:60px;top:35.4px;width:0px;height:1px;background:#b8d0c8"></div><div class="a" style="left:60px;top:38.0px;width:14px;height:1px;background:#b8d0c8"></div><div class="a" style="left:60px;top:40.6px;width:12px;height:1px;background:#b8d0c8"></div><div class="a" style="left:85px;top:12px;width:19px;height:38px;background:#f6f2ea;border-radius:1px"></div><div class="a" style="left:86px;top:20px;width:17px;height:1.5px;background:#e8b070;opacity:.8"></div><div class="a" style="left:86px;top:30px;width:17px;height:1.5px;background:#e8b070;opacity:.8"></div><div class="a" style="left:72px;top:14px;width:12px;height:1px;background:#e8a060"></div><div class="a" style="left:72px;top:26px;width:12px;height:1px;background:#e8a060"></div></div>
<div class="a th" style="left:34px;top:739px;background:#f4f4f2;"><div class="a" style="left:4px;top:6px;width:36px;height:2.5px;background:#5a5a5a;opacity:.85"></div><div class="a" style="left:4px;top:11px;width:44px;height:1px;background:#999"></div><div class="a" style="left:4px;top:31.0px;width:46px;height:1px;background:#b4b4b4"></div><div class="a" style="left:4px;top:33.3px;width:44px;height:1px;background:#b4b4b4"></div><div class="a" style="left:4px;top:35.6px;width:48px;height:1px;background:#b4b4b4"></div><div class="a" style="left:4px;top:37.9px;width:46px;height:1px;background:#b4b4b4"></div><div class="a" style="left:4px;top:40.2px;width:0px;height:1px;background:#b4b4b4"></div><div class="a" style="left:4px;top:42.5px;width:48px;height:1px;background:#b4b4b4"></div><div class="a" style="left:4px;top:44.8px;width:46px;height:1px;background:#b4b4b4"></div><div class="a" style="left:4px;top:47.1px;width:44px;height:1px;background:#b4b4b4"></div><div class="a" style="left:4px;top:49.4px;width:0px;height:1px;background:#b4b4b4"></div><div class="a" style="left:4px;top:51.7px;width:48px;height:1px;background:#b4b4b4"></div><div class="a" style="left:4px;top:54.0px;width:46px;height:1px;background:#b4b4b4"></div><div class="a" style="left:56px;top:4px;width:53px;height:53px;background:#3d7868"></div><div class="a" style="left:56px;top:4px;width:53px;height:9px;background:#2c5a50"></div><div class="a" style="left:58px;top:14px;width:15px;height:32px;background:#f6f6f6"></div><div class="a" style="left:76px;top:14px;width:15px;height:32px;background:#f6f6f6"></div><div class="a" style="left:94px;top:14px;width:15px;height:32px;background:#f6f6f6"></div></div>
<div class="a th" style="left:34px;top:822px;background:#f4f4f2;"><div class="a" style="left:4px;top:6px;width:40px;height:2.5px;background:#5a5a5a;opacity:.85"></div><div class="a" style="left:4px;top:11px;width:44px;height:1px;background:#999"></div><div class="a" style="left:4px;top:31.0px;width:44px;height:1px;background:#b4b4b4"></div><div class="a" style="left:4px;top:33.3px;width:46px;height:1px;background:#b4b4b4"></div><div class="a" style="left:4px;top:35.6px;width:40px;height:1px;background:#b4b4b4"></div><div class="a" style="left:4px;top:37.9px;width:44px;height:1px;background:#b4b4b4"></div><div class="a" style="left:4px;top:40.2px;width:40px;height:1px;background:#b4b4b4"></div><div class="a" style="left:4px;top:42.5px;width:46px;height:1px;background:#b4b4b4"></div><div class="a" style="left:4px;top:44.8px;width:0px;height:1px;background:#b4b4b4"></div><div class="a" style="left:4px;top:47.1px;width:20px;height:1px;background:#b4b4b4"></div><div class="a" style="left:4px;top:49.4px;width:44px;height:1px;background:#b4b4b4"></div><div class="a" style="left:4px;top:51.7px;width:46px;height:1px;background:#b4b4b4"></div><div class="a" style="left:4px;top:54.0px;width:42px;height:1px;background:#b4b4b4"></div><div class="a" style="left:56px;top:4px;width:53px;height:53px;background:#3d7566"></div><div class="a" style="left:63px;top:14px;width:40px;height:26px;background:#222;border-radius:2px"></div><div class="a" style="left:65px;top:16px;width:36px;height:21px;background:#f0eeea"></div><div class="a" style="left:66px;top:19px;width:17px;height:15px;background:#d08a4a"></div><div class="a" style="left:59px;top:40px;width:48px;height:4px;background:#777"></div></div>
<div class="a th" style="left:34px;top:904px;background:linear-gradient(200deg,#1d3f38 0%,#2a6555 50%,#3a8570 100%);"><div class="a" style="left:4px;top:5px;width:33px;height:3px;background:#dfe9e4"></div><div class="a" style="left:4px;top:10px;width:44px;height:1px;background:#a8c4ba"></div><div class="a" style="left:4px;top:19.0px;width:36px;height:1px;background:#6f9c8d"></div><div class="a" style="left:4px;top:21.4px;width:38px;height:1px;background:#6f9c8d"></div><div class="a" style="left:4px;top:23.8px;width:30px;height:1px;background:#6f9c8d"></div><div class="a" style="left:4px;top:26.2px;width:0px;height:1px;background:#6f9c8d"></div><div class="a" style="left:4px;top:28.6px;width:38px;height:1px;background:#6f9c8d"></div><div class="a" style="left:4px;top:31.0px;width:44px;height:1px;background:#6f9c8d"></div><div class="a" style="left:4px;top:33.4px;width:30px;height:1px;background:#6f9c8d"></div><div class="a" style="left:4px;top:35.8px;width:0px;height:1px;background:#6f9c8d"></div><div class="a" style="left:4px;top:38.2px;width:28px;height:1px;background:#6f9c8d"></div><div class="a" style="left:4px;top:40.6px;width:36px;height:1px;background:#6f9c8d"></div><div class="a" style="left:4px;top:43.0px;width:40px;height:1px;background:#6f9c8d"></div><div class="a" style="left:55px;top:19.0px;width:40px;height:1px;background:#6f9c8d"></div><div class="a" style="left:55px;top:21.4px;width:38px;height:1px;background:#6f9c8d"></div><div class="a" style="left:55px;top:23.8px;width:30px;height:1px;background:#6f9c8d"></div><div class="a" style="left:55px;top:26.2px;width:0px;height:1px;background:#6f9c8d"></div><div class="a" style="left:55px;top:28.6px;width:34px;height:1px;background:#6f9c8d"></div><div class="a" style="left:55px;top:31.0px;width:42px;height:1px;background:#6f9c8d"></div><div class="a" style="left:55px;top:33.4px;width:30px;height:1px;background:#6f9c8d"></div><div class="a" style="left:55px;top:35.8px;width:0px;height:1px;background:#6f9c8d"></div><div class="a" style="left:55px;top:38.2px;width:0px;height:1px;background:#6f9c8d"></div><div class="a" style="left:55px;top:40.6px;width:46px;height:1px;background:#6f9c8d"></div><div class="a" style="left:55px;top:43.0px;width:20px;height:1px;background:#6f9c8d"></div><div class="a" style="left:4px;top:54px;width:8px;height:2px;background:#6aa6d8"></div></div>
<div class="a th" style="left:34px;top:987px;background:linear-gradient(200deg,#1d3f38 0%,#2a6555 50%,#3f8a72 100%);"><div class="a" style="left:62px;top:20px;width:9px;height:10px;background:#e87f10;border-radius:1px"></div><div class="a" style="left:66px;top:20px;width:1px;height:10px;background:#7a4a10"></div><div class="a" style="left:62px;top:25px;width:9px;height:1px;background:#7a4a10"></div></div>
<div id="lstrip" class="a"></div>
<div id="main" class="a"></div>
<div id="slide" class="a"></div>

<div class="a" style="left:300px;top:402px;font-size:42px;line-height:48px;font-weight:bold;color:#1f1f1f;white-space:nowrap;letter-spacing:0px;-webkit-text-stroke:.5px #1f1f1f">Smarter Decks</div>
<div class="a" style="left:258px;top:453px;font-size:18px;line-height:23px;color:#262626;white-space:nowrap;letter-spacing:.85px;-webkit-text-stroke:.2px #262626">Follow these quick steps to make offgen work for<br>you</div>
<div class="a" style="left:258px;top:625px;font-size:16px;line-height:20.6px;font-weight:bold;color:#1f1f1f;white-space:nowrap">
<div>1.</div><div>2.</div><div>3.</div><div>4.</div><div>5.</div></div>
<div class="a" style="left:287px;top:625px;font-size:16px;line-height:20.6px;font-weight:bold;color:#1f1f1f;white-space:nowrap;letter-spacing:.42px">
<div>Install offgen</div><div>Explore the Ribbon</div><div>Try Your First Smart Alignment</div><div>Use AI to Improve Your Content</div><div>FAQ</div></div>

<svg class="a" style="left:796px;top:388px" width="374" height="471" viewBox="0 0 374 471">
<defs>
<clipPath id="pc"><rect x="0" y="0" width="374" height="471" rx="24" ry="24"/></clipPath>
<filter id="bl" x="-10%" y="-10%" width="120%" height="120%"><feGaussianBlur stdDeviation="1.5"/></filter>
<filter id="bl3" x="-20%" y="-20%" width="140%" height="140%"><feGaussianBlur stdDeviation="3"/></filter>
<linearGradient id="tbl" x1="0" y1="0" x2="0.3" y2="1"><stop offset="0" stop-color="#4a200c"/><stop offset=".5" stop-color="#33160a"/><stop offset="1" stop-color="#1e0d05"/></linearGradient>
<linearGradient id="lap" x1="0" y1="0" x2="1" y2="1"><stop offset="0" stop-color="#b27a5c"/><stop offset=".6" stop-color="#a06a4e"/><stop offset="1" stop-color="#c08a66"/></linearGradient>
<linearGradient id="yel" x1="0" y1="0" x2="1" y2="0"><stop offset="0" stop-color="#eeb52a"/><stop offset=".65" stop-color="#f2bd36"/><stop offset="1" stop-color="#c98a18"/></linearGradient>
<linearGradient id="slv" x1="0" y1="0" x2="0" y2="1"><stop offset="0" stop-color="#f4c23c"/><stop offset=".5" stop-color="#e2a82c"/><stop offset="1" stop-color="#c4861c"/></linearGradient>
<linearGradient id="skin" x1="0" y1="0" x2="1" y2="1"><stop offset="0" stop-color="#e8a068"/><stop offset=".6" stop-color="#c87444"/><stop offset="1" stop-color="#8a4420"/></linearGradient>
<linearGradient id="skin2" x1="0" y1="0" x2=".6" y2="1"><stop offset="0" stop-color="#e09a5c"/><stop offset=".55" stop-color="#c86a30"/><stop offset="1" stop-color="#8a3a12"/></linearGradient>
<radialGradient id="cup" cx=".45" cy=".45" r=".6"><stop offset=".7" stop-color="#b9b2aa"/><stop offset="1" stop-color="#7a726c"/></radialGradient>
<pattern id="rib" width="6" height="5" patternUnits="userSpaceOnUse" patternTransform="rotate(12)"><rect width="6" height="5" fill="none"/><rect y="3.6" width="6" height="1.1" fill="#a86a10" opacity=".45"/></pattern>
</defs>
<g id="photoG" clip-path="url(#pc)">
<rect x="0" y="0" width="374" height="471" fill="#1e0d06"/>
<!-- table -->
<rect x="105" y="0" width="185" height="471" fill="url(#tbl)"/>
<rect x="200" y="0" width="85" height="55" fill="#7a4a30" filter="url(#bl3)"/>
<path d="M109 170L150 200L155 245L109 245z" fill="#6a3a20" filter="url(#bl3)"/>
<!-- dark strip -->
<rect x="82" y="0" width="27" height="260" fill="#0f161c"/>
<rect x="55" y="0" width="54" height="30" fill="#3e3430"/>
<rect x="94" y="10" width="7" height="21" fill="#b0a49c" opacity=".8"/>
<!-- laptop -->
<rect x="283" y="0" width="91" height="285" fill="url(#lap)"/>
<rect x="274" y="18" width="12" height="270" fill="#2e1408" filter="url(#bl)"/>
<rect x="285" y="0" width="89" height="14" fill="#6a4028"/>
<rect x="289" y="88" width="64" height="146" fill="#b27e62" stroke="#95644a" stroke-width="1" rx="3"/>
<rect x="356" y="20" width="18" height="160" fill="#120c0a"/>
<path d="M356 40h18M356 59h18M356 78h18M356 97h18M356 116h18M356 135h18" stroke="#3a2a24" stroke-width="1.5"/>
<path d="M283 210L374 120L374 175L300 262L283 262z" fill="#cf9a74" opacity=".6" filter="url(#bl3)"/>
<!-- top hand -->
<path d="M141 0C150 10 165 20 174.5 30.6C180 40 185 50 188 57.4C195 70 202 78 208 84.2C215 95 222 105 228 111C233 113 237 114 241.7 115L261.8 117.8L268.5 117.8C272 100 275 85 275.2 70.8C273 65 270 60 268.5 57.4C262 45 258 35 252.4 27.9C245 20 236 17 228 14.4C218 8 210 3 201.4 0z" fill="url(#skin2)" filter="url(#bl)"/>
<path d="M200 0C215 8 235 16 250 28C258 38 265 52 270 62C258 58 240 50 225 40C212 28 205 15 200 0z" fill="#f4c898" opacity=".75" filter="url(#bl3)"/>
<path d="M218 70C225 80 232 95 236 108C240 100 242 88 238 78C232 70 225 66 218 70z" fill="#5a2808" opacity=".8" filter="url(#bl3)"/>
<!-- yellow body -->
<path d="M0 0L62 0C78 12 88 40 91 86L92 300L0 300z" fill="url(#yel)"/>
<clipPath id="bodyc"><path d="M0 0L62 0C78 12 88 40 91 86L92 300L0 300z"/></clipPath><g clip-path="url(#bodyc)"><path d="M0 3.0Q46 -8.0 92 -10.0M0 8.3Q46 -2.7 92 -4.7M0 13.6Q46 2.6 92 0.6M0 18.9Q46 7.9 92 5.9M0 24.2Q46 13.2 92 11.2M0 29.5Q46 18.5 92 16.5M0 34.8Q46 23.8 92 21.8M0 40.1Q46 29.1 92 27.1M0 45.4Q46 34.4 92 32.4M0 50.7Q46 39.7 92 37.7M0 56.0Q46 45.0 92 43.0M0 61.3Q46 50.3 92 48.3M0 66.6Q46 55.6 92 53.6M0 71.9Q46 60.9 92 58.9M0 77.2Q46 66.2 92 64.2M0 82.5Q46 71.5 92 69.5M0 87.8Q46 76.8 92 74.8M0 93.1Q46 82.1 92 80.1M0 98.4Q46 87.4 92 85.4M0 103.7Q46 92.7 92 90.7M0 109.0Q46 98.0 92 96.0M0 114.3Q46 103.3 92 101.3M0 119.6Q46 108.6 92 106.6M0 124.9Q46 113.9 92 111.9M0 130.2Q46 119.2 92 117.2M0 135.5Q46 124.5 92 122.5M0 140.8Q46 129.8 92 127.8M0 146.1Q46 135.1 92 133.1M0 151.4Q46 140.4 92 138.4M0 156.7Q46 145.7 92 143.7M0 162.0Q46 151.0 92 149.0M0 167.3Q46 156.3 92 154.3M0 172.6Q46 161.6 92 159.6M0 177.9Q46 166.9 92 164.9M0 183.2Q46 172.2 92 170.2M0 188.5Q46 177.5 92 175.5M0 193.8Q46 182.8 92 180.8M0 199.1Q46 188.1 92 186.1M0 204.4Q46 193.4 92 191.4M0 209.7Q46 198.7 92 196.7M0 215.0Q46 204.0 92 202.0M0 220.3Q46 209.3 92 207.3M0 225.6Q46 214.6 92 212.6M0 230.9Q46 219.9 92 217.9M0 236.2Q46 225.2 92 223.2M0 241.5Q46 230.5 92 228.5M0 246.8Q46 235.8 92 233.8M0 252.1Q46 241.1 92 239.1M0 257.4Q46 246.4 92 244.4M0 262.7Q46 251.7 92 249.7M0 268.0Q46 257.0 92 255.0M0 273.3Q46 262.3 92 260.3M0 278.6Q46 267.6 92 265.6M0 283.9Q46 272.9 92 270.9M0 289.2Q46 278.2 92 276.2M0 294.5Q46 283.5 92 281.5M0 299.8Q46 288.8 92 286.8M0 305.1Q46 294.1 92 292.1M0 310.4Q46 299.4 92 297.4M0 315.7Q46 304.7 92 302.7" fill="none" stroke="#a8680c" stroke-width="1.4" opacity=".55"/><rect x="60" y="0" width="32" height="300" fill="#8a4a08" opacity=".18" filter="url(#bl3)"/></g>
<!-- hair -->
<path d="M0 0L30 0C34 8 30 18 34 28C38 45 33 60 28 75C30 95 25 110 14 125L0 130z" fill="#3a2010" filter="url(#bl)"/><path d="M22 0C30 6 42 4 48 14C44 22 36 20 30 26z" fill="#4a2a12" filter="url(#bl)"/>
<path d="M8 10C14 14 20 10 24 18M5 45C12 48 18 44 22 52M6 85C12 88 16 86 18 96" stroke="#7a4a22" stroke-width="3" fill="none" opacity=".7" filter="url(#bl)"/><ellipse cx="18" cy="45" rx="8" ry="5" fill="#9a6a40" opacity=".7" filter="url(#bl3)"/><ellipse cx="20" cy="90" rx="6" ry="8" fill="#8a5a30" opacity=".6" filter="url(#bl3)"/><path d="M30 2C38 10 48 8 52 18C46 24 40 26 34 30" stroke="#3a2010" stroke-width="5" fill="none" opacity=".8" filter="url(#bl)"/>
<!-- bottom left floor -->
<rect x="0" y="330" width="107" height="141" fill="#66564d"/>
<path d="M25 345L0 400M107 405L65 471" stroke="#b0a298" stroke-width="3.5" opacity=".6" filter="url(#bl3)"/>
<!-- lit patch -->
<path d="M107 454L189 413L189 471L107 471z" fill="#6a4230" filter="url(#bl)"/>
<!-- forearm hand -->
<path d="M236 258C265 248 300 236 322 227C335 210 355 190 374 174L374 279L322 279C300 295 280 310 258 322z" fill="url(#skin)" filter="url(#bl)"/><path d="M330 200C345 215 360 240 374 250L374 180z" fill="#d88a58" opacity=".7" filter="url(#bl3)"/>
<!-- sleeve -->
<path d="M0 236C40 240 90 262 135 277C170 272 205 262 236 254C246 270 254 290 260 316L150 364C100 360 50 352 0 346z" fill="url(#slv)" filter="url(#bl)"/>
<path d="M0 236C40 240 90 262 135 277C170 272 205 262 236 254C246 270 254 290 260 316L150 364C100 360 50 352 0 346z" fill="url(#rib)"/>
<path d="M136 280C142 300 148 335 150 362M215 262C225 280 238 300 246 320" stroke="#b07214" stroke-width="2" fill="none" opacity=".6"/>
<!-- cup -->
<rect x="349" y="448" width="12" height="25" fill="#c8c0b8" transform="rotate(-20 355 460)"/>
<ellipse cx="335" cy="413" rx="38" ry="43" fill="url(#cup)"/>
<ellipse cx="333.5" cy="414" rx="28" ry="35" fill="#070302"/>
</g>
</svg>

<svg class="a" style="left:558px;top:432px" width="60" height="80" viewBox="0 0 60 80">
<defs><filter id="csh" x="-30%" y="-30%" width="160%" height="160%"><feGaussianBlur stdDeviation="2"/></filter></defs>
<polygon points="8.5,9.3 8.5,65.2 21.0,54.3 28.9,74.3 41.8,69.3 34.3,50.2 51.0,49.3" fill="rgba(0,0,0,.35)" filter="url(#csh)"/>
<polygon points="7.0,6.3 7.0,62.2 19.5,51.3 27.4,71.3 40.3,66.3 32.8,47.2 49.5,46.3" fill="#fff"/>
<polygon points="9.9,13.4 9.9,55.5 19.9,45.9 29.5,67.2 35.3,64.7 28.3,43.8 40.3,43.4" fill="#000"/>
</svg>
<div id="rpane" class="a"></div>

<!-- right pane -->
<div class="a" style="left:1242px;top:197px;width:208px;height:36px;background:#e9e9e9"></div>
<div class="a" style="left:1450px;top:197px;width:210px;height:29px;background:#e4e4e4;border-bottom:1px solid #d6d6d6;border-left:1px solid #dadada"></div>
<div class="a" style="left:1250px;top:207px;font-size:14px;line-height:16px;color:#2a2a2a;-webkit-text-stroke:.3px #2a2a2a;letter-spacing:.9px">offgen</div>
<svg class="a" style="left:1426px;top:204px" width="18" height="18" viewBox="0 0 18 18"><circle cx="9" cy="9" r="8" fill="#6b6b6b"/><path d="M5.8 5.8l6.4 6.4M12.2 5.8l-6.4 6.4" stroke="#f2f2f2" stroke-width="1.6"/></svg>
<div class="a" style="left:1460px;top:206px;font-size:14px;line-height:16px;color:#2a2a2a;-webkit-text-stroke:.3px #2a2a2a;letter-spacing:.7px">Format Background</div>
<div class="a" style="left:1246px;top:234px;width:411px;height:816px;background:#f9f9f8;border-radius:8px"></div>
<div class="a" style="left:1246px;top:234px;width:411px;height:42px;background:linear-gradient(#efefee 80%,#f5f5f4);border-radius:8px 8px 0 0"></div>
<div class="a" style="left:1265px;top:244px;width:186px;height:23px;background:#fcfcfb;border-radius:6px;box-shadow:0 1px 1px rgba(0,0,0,.05)"></div>
<svg class="a" style="left:1350px;top:247px" width="17" height="17" viewBox="0 0 17 17" fill="none" stroke="#ec8a2e" stroke-width="1.5"><path d="M2 7.5L8.5 1.5 15 7.5V14a1.5 1.5 0 0 1-1.5 1.5h-10A1.5 1.5 0 0 1 2 14z"/><path d="M6.5 15.5v-5a2 2 0 0 1 4 0v5"/></svg>
<svg class="a" style="left:1536px;top:248px" width="17" height="17" viewBox="0 0 24 24" fill="none" stroke="#2e2e2e" stroke-width="2">
<circle cx="12" cy="12" r="3"/><path d="M12 1.5l2 2.5 3-.8.8 3 2.7 1.3-1 2.8 1.7 2.4-2.5 1.8.2 3.1-3.1.1-1.3 2.8-2.5-1.7-2.5 1.7-1.3-2.8-3.1-.1.2-3.1-2.5-1.8 1.7-2.4-1-2.8L5.9 6.2l.8-3 3 .8z"/></svg>
<div class="a card" style="left:1265px;top:291px;width:378px;height:32px"></div>
<svg class="a" style="left:1275px;top:301px" width="13" height="13" viewBox="0 0 13 13" fill="none" stroke="#a8a8a8" stroke-width="1.3"><circle cx="5.5" cy="5.5" r="4.5"/><path d="M9 9l3.2 3.2"/></svg>
<div class="a" style="left:1297px;top:299px;font-size:14.5px;line-height:16px;color:#a3a3a3;letter-spacing:.55px">Powersearch</div>
<div class="a card" style="left:1266px;top:337px;width:374px;height:75px"></div>
<div class="a rh" style="left:1274px;top:349px;letter-spacing:1.4px">Smart Suggestions</div>
<div class="a card" style="left:1266px;top:424px;width:181px;height:70px"></div>
<div class="a card" style="left:1457px;top:424px;width:182px;height:70px"></div>
<div class="a card" style="left:1264px;top:511px;width:183px;height:71px"></div>
<div class="a card" style="left:1457px;top:511px;width:182px;height:71px"></div>
<div class="a card" style="left:1265px;top:596px;width:182px;height:71px"></div>
<div class="a card" style="left:1457px;top:596px;width:182px;height:71px"></div>
<div class="a rh" style="left:1275px;top:434px;letter-spacing:1.6px">Align</div>
<div class="a rh" style="left:1466px;top:434px;letter-spacing:1.3px">Text</div>
<div class="a rh" style="left:1274px;top:519px;letter-spacing:1.4px">Other</div>
<div class="a rh" style="left:1466px;top:519px;letter-spacing:1.3px">Get-Set</div>
<div class="a rh" style="left:1274px;top:604px;letter-spacing:1.5px">Stretch</div>
<div class="a rh" style="left:1466px;top:604px;letter-spacing:1.15px">Check &amp; Fix</div>
<svg class="a rchev" style="left:1424px;top:439px" width="11" height="7" viewBox="0 0 11 7"><path d="M1 1l4.5 4.5L10 1"/></svg>
<svg class="a rchev" style="left:1615px;top:439px" width="11" height="7" viewBox="0 0 11 7"><path d="M1 1l4.5 4.5L10 1"/></svg>
<svg class="a rchev" style="left:1424px;top:523px" width="11" height="7" viewBox="0 0 11 7"><path d="M1 1l4.5 4.5L10 1"/></svg>
<svg class="a rchev" style="left:1424px;top:608px" width="11" height="7" viewBox="0 0 11 7"><path d="M1 1l4.5 4.5L10 1"/></svg>
<!-- align icons -->
<svg class="a" style="left:1279px;top:459px" width="130" height="20" viewBox="0 0 130 20" fill="none" stroke="#cfcfcf" stroke-width="1.1">
<path d="M1.5 1v19"/><rect x="4" y="3" width="15" height="6" rx="1"/><rect x="4" y="12" width="10" height="6" rx="1"/>
<path d="M37 1.5h20"/><rect x="39" y="4" width="6" height="15" rx="1"/><rect x="48" y="4" width="6" height="10" rx="1"/>
<path d="M72 19.5h20"/><rect x="74" y="1" width="6" height="16" rx="1"/><rect x="83" y="7" width="6" height="10" rx="1"/>
<path d="M126 1v19"/><rect x="107" y="3" width="17" height="6" rx="1"/><rect x="112" y="12" width="12" height="6" rx="1"/>
</svg>
<svg class="a" style="left:1471px;top:461px" width="128" height="17" viewBox="0 0 128 17" fill="none" stroke="#cfcfcf" stroke-width="1.1">
<path d="M1 1.5h18M1 8.5h12M1 15.5h16"/><path d="M37 1.5h18M40 8.5h12M38 15.5h16"/><path d="M72 1.5h18M78 8.5h12M74 15.5h16"/><path d="M107 1.5h18M107 8.5h18M107 15.5h18"/>
</svg>
<!-- other icons -->
<svg class="a" style="left:1278px;top:542px" width="130" height="24" viewBox="0 0 130 24" fill="none" stroke="#cfcfcf" stroke-width="1.1">
<rect x="1" y="1" width="7" height="7" rx="2"/><rect x="5" y="5" width="13" height="13" rx="2"/><rect x="14" y="15" width="8" height="8" rx="2"/>
<rect x="36" y="1" width="14" height="14" rx="2"/><rect x="45" y="13" width="10" height="10" rx="2"/>
<rect x="71" y="1" width="8" height="8" rx="2"/><path d="M79 5h8v10M75 9v7h8"/><rect x="84" y="15" width="8" height="8" rx="2"/>
<rect x="106" y="1" width="15" height="15" rx="2"/><rect x="114" y="12" width="10" height="11" rx="2"/>
</svg>
<svg class="a" style="left:1472px;top:544px" width="92" height="20" viewBox="0 0 92 20" fill="none" stroke="#cfcfcf" stroke-width="1.1">
<rect x="1" y="9" width="17" height="8" rx="1"/><path d="M1 4h17M1 4v3M18 4v3M4 12h11"/>
<path d="M44.5 19C40 14 37 11 37 8a7.5 7.5 0 0 1 15 0c0 3-3 6-7.5 11z"/><circle cx="44.5" cy="8" r="2.5"/>
<path d="M72 19l1-4 9-9 3 3-9 9zM80 8l4-4a2 2 0 0 1 3 3l-4 4M84 3l4 4"/>
</svg>
<!-- stretch icons -->
<svg class="a" style="left:1278px;top:628px" width="130" height="22" viewBox="0 0 130 22" fill="none" stroke="#cfcfcf" stroke-width="1.1">
<path d="M10 1v21"/><rect x="12" y="3" width="10" height="7" rx="1"/><rect x="1" y="13" width="8" height="7" rx="1"/>
<path d="M35 8.5h21"/><rect x="37" y="1" width="8" height="7" rx="1"/><rect x="46" y="11" width="7" height="9" rx="1"/>
<path d="M70 12.5h21"/><rect x="72" y="1" width="8" height="10" rx="1"/><rect x="81" y="14" width="8" height="7" rx="1"/>
<path d="M115 1v21"/><rect x="117" y="3" width="7" height="8" rx="1"/><rect x="104" y="12" width="10" height="7" rx="1"/>
</svg>
<!-- check & fix -->
<div class="a cfb" style="left:1466px;top:624px"></div>
<div class="a cfb" style="left:1501px;top:624px"></div>
<div class="a cfb" style="left:1536px;top:624px"></div>
<svg class="a" style="left:1472px;top:630px" width="19" height="19" viewBox="0 0 19 19" fill="none" stroke="#333" stroke-width="1.3"><rect x="1" y="1" width="17" height="17" rx="1.5"/><path d="M1 5.5h17M6.5 13l3-2.5 3 2.5"/></svg>
<svg class="a" style="left:1507px;top:630px" width="19" height="19" viewBox="0 0 19 19" fill="none" stroke="#333" stroke-width="1.3"><rect x="1" y="1" width="17" height="17" rx="1.5"/><path d="M1 13.5h17M6.5 6l3 2.5 3-2.5"/></svg>
<svg class="a" style="left:1542px;top:630px" width="19" height="19" viewBox="0 0 19 19" fill="none" stroke="#333" stroke-width="1.3"><rect x="1" y="1" width="6" height="17" rx="1.5"/><rect x="10" y="1" width="8" height="7.5" rx="1.5"/><rect x="10" y="10.5" width="8" height="7.5" rx="1.5"/></svg>
<!-- divider -->
<div class="a" style="left:1246px;top:668px;width:411px;height:13px;background:linear-gradient(#f6f6f5,#ededec)"></div>
<div class="a" style="left:1425px;top:681px;width:54px;height:2px;border-radius:1px;background:#c8c8c8"></div>
<svg class="a" style="left:1265px;top:687px" width="16" height="16" viewBox="0 0 16 16"><path d="M8 1C8.6 5.5 10.5 7.4 15 8 10.5 8.6 8.6 10.5 8 15 7.4 10.5 5.5 8.6 1 8 5.5 7.4 7.4 5.5 8 1z" fill="none" stroke="#ec8a2e" stroke-width="1.8" stroke-linejoin="round"/></svg>
<div class="a rh" style="left:1287px;top:686px;letter-spacing:1.3px">AI Agent</div>
<svg class="a" style="left:1618px;top:688px" width="14" height="14" viewBox="0 0 14 14" fill="none" stroke="#555" stroke-width="1.2"><path d="M8.5 5.5L12.5 1.5M9 1.5h3.5V5M5.5 8.5l-4 4M1.5 9v3.5H5"/></svg>
<div class="a" style="left:1250px;top:757px;width:406px;text-align:center;font-size:14.5px;line-height:17px;color:#a2a2a2;-webkit-text-stroke:.3px #a2a2a2;letter-spacing:.8px">Ready when you are.</div>
<div class="a" style="left:1250px;top:783px;width:406px;text-align:center;font-size:12px;line-height:14px;color:#cfcfcf;letter-spacing:.95px">Ask me anything about your presentation.</div>
<div class="a" style="left:1261px;top:951px;width:381px;height:85px;border-radius:8px;background:#fbfbfa;border:1px solid #e9e9e8;box-shadow:0 1px 2px rgba(0,0,0,.03)"></div>
<div class="a" style="left:1274px;top:962px;font-size:15px;line-height:18px;color:#7a7a7a;letter-spacing:1px">Ask anything</div>
<svg class="a" style="left:1280px;top:998px" width="15" height="15" viewBox="0 0 15 15" stroke="#666" stroke-width="1.6"><path d="M7.5 1v13M1 7.5h13"/></svg>
<div class="a" style="left:1323px;top:997px;font-size:15px;line-height:18px;color:#676767;-webkit-text-stroke:.35px #676767;letter-spacing:.9px">Auto</div>
<svg class="a" style="left:1371px;top:1003px" width="11" height="7" viewBox="0 0 11 7" fill="none" stroke="#aaa" stroke-width="1.2"><path d="M1 1l4.5 4.5L10 1"/></svg>
<div class="a" style="left:1606px;top:993px;width:27px;height:27px;border-radius:50%;background:#5f6b76"></div>
<svg class="a" style="left:1612px;top:999px" width="15" height="15" viewBox="0 0 15 15" fill="none" stroke="#f2f4f6" stroke-width="1.1" stroke-linejoin="round"><path d="M14 1L1 6l5.5 2.5L9 14z M14 1L6.5 8.5"/></svg>
<div class="a" style="left:186px;top:1049px;width:1054px;height:1px;background:#dedede"></div><div class="a" style="left:186px;top:1051px;width:1054px;height:4px;background:#f9f9f9"></div>
<div id="status" class="a"></div>
</body></html>
